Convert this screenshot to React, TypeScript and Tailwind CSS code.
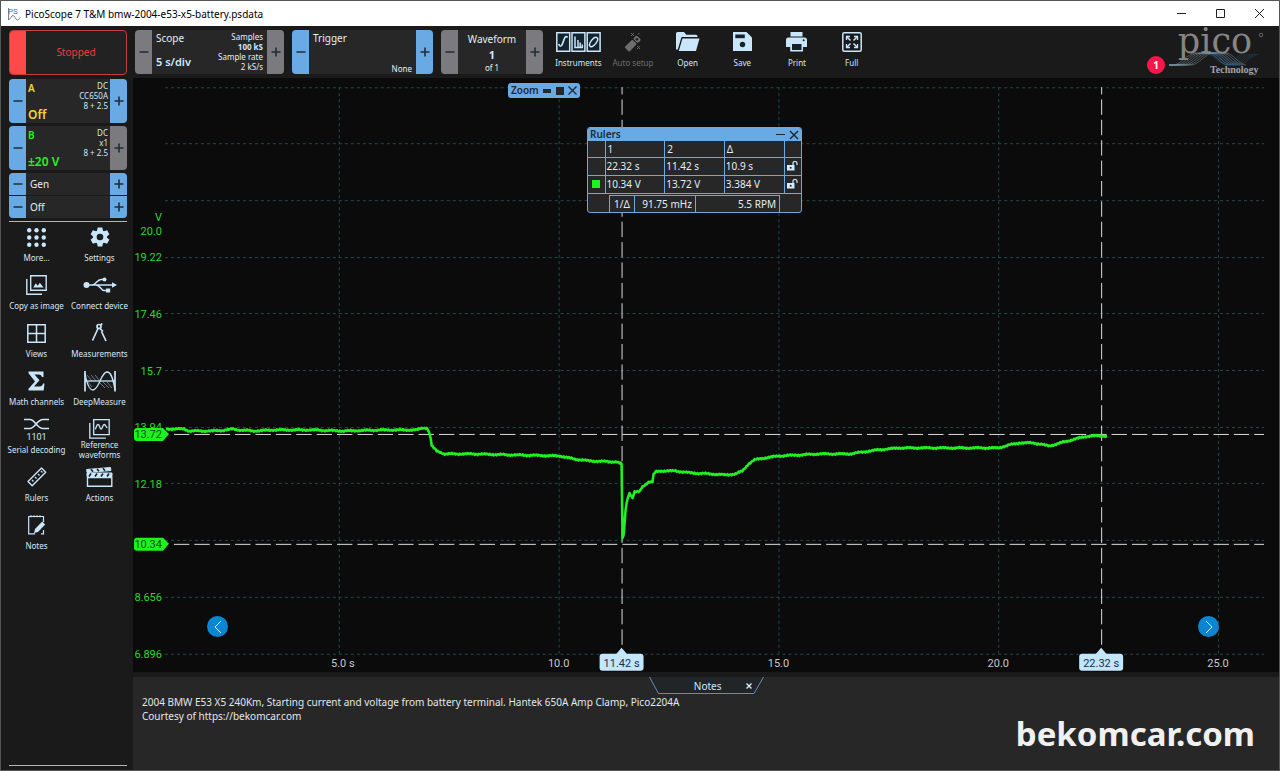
import React from "react";
import { clsx } from "clsx";

type Tone = "blue" | "gray";

interface StepButtonProps {
  sign: "minus" | "plus";
  tone: Tone;
  label: string;
}

const StepButton: React.FC<StepButtonProps> = ({ sign, tone, label }) => (
  <button
    aria-label={label}
    className={clsx(
      "flex w-[17px] shrink-0 items-center justify-center",
      tone === "blue" ? "bg-[#6aaae4]" : "bg-[#7b7b7f]"
    )}
  >
    <svg width="10" height="10" viewBox="0 0 10 10" stroke="#222c36" strokeWidth="1.6">
      <path d={sign === "plus" ? "M.5 5h9M5 .5v9" : "M.5 5h9"} />
    </svg>
  </button>
);

interface StepperProps {
  name: string;
  minus: Tone;
  plus: Tone;
  className?: string;
  children: React.ReactNode;
}

const Stepper: React.FC<StepperProps> = ({ name, minus, plus, className, children }) => (
  <div className={clsx("flex h-11 shrink-0 overflow-hidden rounded-[4px] bg-[#272727]", className)}>
    <StepButton sign="minus" tone={minus} label={`${name} previous`} />
    <div className="min-w-0 flex-1">{children}</div>
    <StepButton sign="plus" tone={plus} label={`${name} next`} />
  </div>
);

interface ChannelProps {
  name: string;
  range: string;
  probe: string;
  color: string;
  plus: Tone;
}

const Channel: React.FC<ChannelProps> = ({ name, range, probe, color, plus }) => (
  <Stepper name={`Channel ${name}`} minus="blue" plus={plus}>
    <div className="flex h-full justify-between px-[2px]">
      <div className={clsx("flex flex-col justify-between font-semibold", color)}>
        <span className="pt-[2px] text-[10px] leading-[14px]">{name}</span>
        <span className="text-[12px] leading-4 whitespace-nowrap">{range}</span>
      </div>
      <div className="pt-[2px] text-right text-[8px] leading-[10px] whitespace-nowrap text-[#d6e6f2]">
        <div>DC</div>
        <div>{probe}</div>
        <div>8 + 2.5</div>
      </div>
    </div>
  </Stepper>
);

const line = {
  fill: "none",
  stroke: "#c9e6fb",
  strokeWidth: 1.5,
};

const icons = {
  instruments: (
    <svg width="45" height="20" viewBox="0 0 45 20" {...line}>
      <path d="M.8.8h12.900v18.400H.8zM16 .8h12.900v18.400H16zM31.200.8h12.900v18.400H31.200z" fill="#15232d" />
      <path d="M2.800 12c.8 3 2.600 3 3.600 0l1.800-5c.8-2.500 2.300-3 3.300-1.500" strokeWidth="1.700" />
      <path d="M19 4.500v11h8M22 15.500V8M24.200 15.500v-5M26.300 15.500v-3" strokeWidth="1.500" />
      <ellipse cx="37.600" cy="10" rx="2.600" ry="5.500" transform="rotate(38 37.600 10)" />
    </svg>
  ),
  auto: (
    <svg width="18" height="20" viewBox="0 0 18 20">
      <g transform="rotate(45 9 11)" fill="#6d6d6d">
        <rect x="6" y="3" width="6.500" height="5" rx="1.500" />
        <rect x="6" y="9" width="6.500" height="11" rx="1" />
        <circle cx="9.200" cy="5.600" r="1.300" fill="#1a1a1a" />
      </g>
      <path d="M7 1l3 3M10 1L7 4M13.500 3l2-2M13 14l3 3M16 14l-3 3" stroke="#6d6d6d" strokeWidth=".9" />
    </svg>
  ),
  open: (
    <svg width="24" height="20" viewBox="0 0 24 20" fill="#c9e6fb">
      <path d="M0 1.500Q0 0 1.500 0H8l2.300 2.800H20q1.500 0 1.500 1.500V5H5.500L1.800 17.500H0z" />
      <path d="M6.500 6.500h17L20 19H2.800z" />
    </svg>
  ),
  save: (
    <svg width="20" height="20" viewBox="0 0 20 20">
      <path d="M1 0h13.500L20 5.500V19H1z" fill="#c9e6fb" />
      <path d="M3.300 2.500h9.500v3.700H3.300z" fill="#14222c" />
      <circle cx="10.500" cy="12.500" r="2.700" fill="#14222c" />
    </svg>
  ),
  print: (
    <svg width="21" height="20" viewBox="0 0 21 20">
      <path d="M4.500 0h12v4.500h-12z" fill="#c9e6fb" />
      <path d="M2.500 5.500h16Q21 5.500 21 8v7h-4v4.500H4.200V15H0V8q0-2.500 2.500-2.500z" fill="#c9e6fb" />
      <path d="M6 12h9.500v6H6z" fill="#14222c" />
      <circle cx="17.700" cy="8.300" r="1" fill="#14222c" />
    </svg>
  ),
  full: (
    <svg width="20" height="20" viewBox="0 0 20 20" {...line}>
      <rect x=".8" y=".8" width="18.400" height="18.400" rx="1.500" />
      <path d="M8.500 8.500L5 5M11.500 8.500L15 5M8.500 11.500L5 15M11.500 11.500L15 15" />
      <path d="M4.500 8V4.500H8M12 4.500h3.500V8M4.500 12v3.500H8M12 15.500h3.500V12" strokeWidth="1.300" />
    </svg>
  ),
  more: (
    <svg width="19" height="19" viewBox="0 0 19 19" fill="#c9e6fb">
      {[2.2, 9.5, 16.8].map((y) =>
        [2.2, 9.5, 16.8].map((x) => <circle key={`${x}-${y}`} cx={x} cy={y} r="2.200" />)
      )}
    </svg>
  ),
  settings: (
    <svg width="20" height="20" viewBox="0 0 20 20">
      <g fill="#c9e6fb">
        <circle cx="10" cy="10" r="7" />
        {[0, 60, 120].map((a) => (
          <path key={a} d="M7.700.5h4.600l.8 4v11l-.8 4H7.700l-.8-4v-11z" transform={`rotate(${a} 10 10)`} />
        ))}
      </g>
      <circle cx="10" cy="10" r="3.300" fill="#1a1a1a" />
    </svg>
  ),
  copy: (
    <svg width="21" height="20" viewBox="0 0 21 20" {...line} strokeWidth="1.400">
      <path d="M4.700.7h15.500v14.500H4.700z" />
      <path d="M.8 4v15.200H16" />
      <path d="M7.200 12.500l2.600-4.200 2 2.500 2-3 3.800 4.700z" fill="#c9e6fb" stroke="none" />
    </svg>
  ),
  usb: (
    <svg width="34" height="16" viewBox="0 0 34 16" {...line} strokeWidth="1.500">
      <circle cx="3.500" cy="8" r="3" fill="#c9e6fb" stroke="none" />
      <path d="M3 8h27M9 8c4 0 5-5.500 9-5.500h3M13 8c4 0 5 5.500 8 5.500h3" />
      <circle cx="21.500" cy="2.500" r="2" fill="#c9e6fb" stroke="none" />
      <path d="M23 11.500h4.200v4H23z" fill="#c9e6fb" stroke="none" />
      <path d="M29 5.300L34 8l-5 2.700z" fill="#c9e6fb" stroke="none" />
    </svg>
  ),
  views: (
    <svg width="19" height="19" viewBox="0 0 19 19" {...line}>
      <path d="M.8.8h17.400v17.400H.8zM9.500.8v17.400M.8 9.500h17.400" />
    </svg>
  ),
  measure: (
    <svg width="17" height="20" viewBox="0 0 17 20" {...line} strokeWidth="1.700">
      <circle cx="8" cy="3.500" r="2" />
      <path d="M7 5.500L1.500 17.500M9 5.500l3 3M10.500 8.500l4.500 9.500" />
      <path d="M10 1.800l1.300-1.300" />
    </svg>
  ),
  math: (
    <svg width="17" height="20" viewBox="0 0 17 20" fill="#c9e6fb">
      <path d="M.5.500h15v5.500h-1.500q-.5-2.500-3-2.500H6.500l5 5.700-5.500 6.300h5.500q3 0 3.500-3H16.500l-.8 7H.5v-1.700L7 10.500.5 2.200z" />
    </svg>
  ),
  deep: (
    <svg width="32" height="21" viewBox="0 0 32 21" {...line} strokeWidth="1.300">
      <path d="M1 0v20.500M31 0v20.500" strokeWidth="1.700" />
      <path d="M1 10h30" />
      <path d="M1 2C3 14 6 19 9 19c6 0 8-18 14-18 4 0 6 6 8 18" />
      <path d="M3 4l5 6M7 4l5 6M11 4l4 5M15 11l6 6M19 11l6 6M23 11l5 6M4 11l4 5" strokeWidth=".6" opacity=".8" />
    </svg>
  ),
  serial: (
    <svg width="25" height="22" viewBox="0 0 25 22" {...line} strokeWidth="1.600">
      <path d="M0 1.500h6c5 0 7 9 13 9h6M0 10.500h6c5 0 7-9 13-9h6" />
      <text x="12.500" y="21.500" textAnchor="middle" fontSize="9" fontFamily="Roboto, sans-serif" fill="#c9e6fb" stroke="none">1101</text>
    </svg>
  ),
  reference: (
    <svg width="21" height="20" viewBox="0 0 21 20" {...line} strokeWidth="1.300">
      <path d="M4.700.7h15.500v15H4.700z" />
      <path d="M.8 4v15.200h16" />
      <path d="M6 10c1.500 0 1-4.500 3-4.500s1.500 4.500 3 4.500 1.500-4.500 3.300-4.500S16.500 8.500 18.500 8.500" />
    </svg>
  ),
  ruler: (
    <svg width="20" height="20" viewBox="0 0 20 20" {...line} strokeWidth="1.400">
      <path d="M1 14.500L14.500 1l4.200 4.200L5.200 18.700z" strokeLinejoin="round" />
      <path d="M5 13l1.500 1.500M8 10l1.500 1.500M11 7l1.500 1.500M14 4l1.500 1.500" strokeWidth="1.200" />
    </svg>
  ),
  actions: (
    <svg width="27" height="20" viewBox="0 0 27 20" {...line} strokeWidth="1.400">
      <path d="M1.500 10.500h24.300v8.700H1.500z" />
      <path d="M1 6h25v3.500H1zM.7 2.500L24.500.5l.4 3L1 5.500z" fill="#c9e6fb" strokeWidth="1" />
      <path d="M5 6.500l-2 3M11 6.500l-2 3M17 6.500l-2 3M23 6.500l-2 3M5 2.300l2 2.500M11 1.800l2 2.500M17 1.300l2 2.500" stroke="#1a1a1a" strokeWidth="1.500" />
    </svg>
  ),
  notes: (
    <svg width="18" height="20" viewBox="0 0 18 20" {...line} strokeWidth="1.200">
      <path d="M15.500 7V1.500H.7v17.300h6.500M13 18.800h2.500V15" />
      <path d="M3 .3v2M6 .3v2M9 .3v2M12 .3v2" />
      <path d="M6 18l1-4 7.200-7.500 3 3L10 17z" fill="#c9e6fb" stroke="none" />
    </svg>
  ),
};

const toolbar = [
  { label: "Instruments", icon: icons.instruments },
  { label: "Auto setup", icon: icons.auto, disabled: true },
  { label: "Open", icon: icons.open },
  { label: "Save", icon: icons.save },
  { label: "Print", icon: icons.print },
  { label: "Full", icon: icons.full },
];

const sideTools = [
  { label: "More...", icon: icons.more },
  { label: "Settings", icon: icons.settings },
  { label: "Copy as image", icon: icons.copy },
  { label: "Connect device", icon: icons.usb },
  { label: "Views", icon: icons.views },
  { label: "Measurements", icon: icons.measure },
  { label: "Math channels", icon: icons.math },
  { label: "DeepMeasure", icon: icons.deep },
  { label: "Serial decoding", icon: icons.serial },
  { label: "Reference waveforms", icon: icons.reference },
  { label: "Rulers", icon: icons.ruler },
  { label: "Actions", icon: icons.actions },
  { label: "Notes", icon: icons.notes },
];

const TitleBar = () => (
  <div className="flex h-[25px] shrink-0 items-center bg-white pl-[7px] text-black">
    <svg width="13" height="14" viewBox="0 0 13 14">
      <text x="0" y="7" fontSize="8" fontFamily="Roboto, sans-serif" fill="#2f7fc0">PS</text>
      <path d="M.5 12.500C3 12.500 3 8.500 5 8.500s2.500 4.500 4.500 4.500 1.500-2.500 3-2.500M.5 1v12" fill="none" stroke="#55646f" strokeWidth=".8" />
    </svg>
    <span className="ml-1 text-[10px] leading-4">PicoScope 7 T&amp;M bmw-2004-e53-x5-battery.psdata</span>
    <div className="ml-auto flex">
      <button aria-label="Minimize" className="flex h-[25px] w-[39px] items-center justify-center">
        <svg width="9" height="9" viewBox="0 0 9 9"><path d="M0 4.500h9" stroke="#222" /></svg>
      </button>
      <button aria-label="Maximize" className="flex h-[25px] w-[39px] items-center justify-center">
        <svg width="9" height="9" viewBox="0 0 9 9"><path d="M.5.5h8v8h-8z" fill="none" stroke="#222" /></svg>
      </button>
      <button aria-label="Close" className="flex h-[25px] w-[39px] items-center justify-center">
        <svg width="9" height="9" viewBox="0 0 9 9"><path d="M0 0l9 9M9 0L0 9" stroke="#222" /></svg>
      </button>
    </div>
  </div>
);

const Logo = () => (
  <svg width="98" height="58" viewBox="0 -8 98 58" role="img" aria-label="pico Technology">
    {[0, 1, 2, 3, 4, 5, 6].map((i) => (
      <g key={i} fill="none" strokeWidth=".7">
        <path d={`M0 39h${4 + i * 3}c8 0 14-12 23-12h12c7 0 13 12 20 12`} stroke="#7e98a8" opacity=".7" />
        <path d={`M${36 + i * 2} 27c8 0 14 12 22 12s10-9 ${14 + i}-11`} stroke="#23587c" opacity=".6" />
      </g>
    ))}
    <text x="46" y="27" textAnchor="middle" fontSize="35" fontFamily="'DejaVu Serif', serif" fill="#858585">pico</text>
    <circle cx="92" cy="9" r="1.800" fill="none" stroke="#777" strokeWidth=".8" />
    <text x="41" y="47" fontSize="10" fontWeight="bold" fontFamily="'Liberation Serif', serif" fill="#a3a3a3">Technology</text>
  </svg>
);

const Header = () => (
  <header className="flex h-[52px] shrink-0 items-start gap-2 pt-1 pl-2">
    <button className="flex h-[45px] w-[118px] shrink-0 overflow-hidden rounded-[4px] border border-[#c93c3c] bg-[#222] text-[10px] text-[#e8413f]">
      <span className="h-full w-4 bg-[#fb4a48]" />
      <span className="flex h-full flex-1 items-center justify-center">Stopped</span>
    </button>

    <Stepper name="Scope" minus="gray" plus="gray" className="w-[149px]">
      <div className="flex h-full justify-between px-1">
        <div className="flex flex-col justify-between">
          <span className="text-[10px] leading-4 text-[#e6eef4]">Scope</span>
          <span className="pb-1 text-[11px] leading-4 font-semibold whitespace-nowrap text-[#cde8fc]">5 s/div</span>
        </div>
        <div className="pt-[2px] text-right text-[8px] leading-[10px] whitespace-nowrap text-[#e6eef4]">
          <div>Samples</div>
          <div className="font-bold text-[#cde8fc]">100 kS</div>
          <div>Sample rate</div>
          <div>2 kS/s</div>
        </div>
      </div>
    </Stepper>

    <Stepper name="Trigger" minus="blue" plus="blue" className="w-[141px]">
      <div className="flex h-full flex-col justify-between px-1">
        <span className="text-[10px] leading-4 text-[#e6eef4]">Trigger</span>
        <span className="text-right text-[8px] leading-[10px] text-[#e6eef4]">None</span>
      </div>
    </Stepper>

    <Stepper name="Waveform" minus="gray" plus="gray" className="w-[102px]">
      <div className="flex h-full flex-col items-center justify-between pt-[1px]">
        <span className="text-[10px] leading-4 text-[#e6eef4]">Waveform</span>
        <span className="text-[11px] leading-[14px] font-bold text-[#cde8fc]">1</span>
        <span className="text-[8px] leading-3 text-[#e6eef4]">of 1</span>
      </div>
    </Stepper>

    <div className="grid w-[328px] shrink-0 grid-cols-6">
      {toolbar.map((t) => (
        <button
          key={t.label}
          disabled={t.disabled}
          className={clsx(
            "flex flex-col items-center text-[8px] leading-[10px] whitespace-nowrap",
            t.disabled ? "text-[#6d6d6d]" : "text-[#cde8fc]"
          )}
        >
          <span className="flex h-6 items-center">{t.icon}</span>
          <span className="mt-1">{t.label}</span>
        </button>
      ))}
    </div>

    <div className="relative mr-3 ml-auto -mt-3">
      <Logo />
      <span className="absolute top-[38px] -left-[22px] flex h-[18px] w-[18px] items-center justify-center rounded-full bg-[#f8164a] text-[10px] font-bold text-white">
        1
      </span>
    </div>
  </header>
);

const Sidebar = () => (
  <aside className="flex w-[132px] shrink-0 flex-col pt-[1px] pr-[6px] pl-2">
    <div className="flex flex-col gap-[3px]">
      <Channel name="A" range="Off" probe="CC650A" color="text-[#f2d43c]" plus="blue" />
      <Channel name="B" range="±20 V" probe="x1" color="text-[#2bf02b]" plus="gray" />
      <div className="flex flex-col gap-[1px] overflow-hidden rounded-[4px]">
        {["Gen", "Off"].map((g) => (
          <div key={g} className="flex h-[22px] bg-[#272727]">
            <StepButton sign="minus" tone="blue" label={`${g} previous`} />
            <span className="flex-1 pl-1 text-[10px] leading-[22px] text-[#e6eef4]">{g}</span>
            <StepButton sign="plus" tone="blue" label={`${g} next`} />
          </div>
        ))}
      </div>
    </div>
    <hr className="mt-[3px] border-[#b5b5b5]" />
    <nav className="-mx-1 grid grid-cols-2">
      {sideTools.map((t) => (
        <button
          key={t.label}
          className="flex h-12 flex-col items-center text-[8px] leading-[10px] text-[#d6e9f7]"
        >
          <span className="flex h-[26px] shrink-0 items-center pt-1">{t.icon}</span>
          <span className={clsx("flex h-5 items-center", t.label.length < 16 && "whitespace-nowrap")}>{t.label}</span>
        </button>
      ))}
    </nav>
    <hr className="mt-auto mb-1 border-[#b5b5b5]" />
  </aside>
);

// plot area, one volt is 32.2 units and one second is 44 units
const LEFT = 32;
const RIGHT = 1132;
const TOP = 9;
const BOTTOM = 576;
const timeX = (t: number) => 44 * t - 14;
const rows = ["", "", "", "19.22", "17.46", "15.7", "13.94", "12.18", "", "8.656", "6.896"];
const times = [
  { t: 5, label: "5.0 s" },
  { t: 10, label: "10.0" },
  { t: 15, label: "15.0" },
  { t: 20, label: "20.0" },
  { t: 25, label: "25.0" },
];

const samples: [number, number][] = [
  [33, 351], [51, 351], [56, 353], [80, 353], [94, 352], [100, 351], [106, 352], [122, 353], [140, 352],
  [180, 352], [210, 353], [250, 352], [284, 352], [290, 350], [294, 350], [296, 353], [298, 361], [299, 368],
  [304, 373], [312, 376], [340, 376], [380, 377], [427, 378], [441, 381], [457, 383], [484, 384], [489, 386],
  [490, 460], [491, 458], [493, 432], [495, 420], [497, 415], [500, 420], [502, 414], [507, 414], [509, 410],
  [511, 408], [516, 404], [520, 404], [521, 397], [523, 394], [528, 393], [543, 393], [558, 395], [578, 396],
  [593, 397], [603, 396], [610, 393], [616, 386], [622, 382], [632, 380], [647, 378], [687, 376], [717, 376],
  [745, 372], [767, 370], [866, 370], [877, 367], [887, 365], [902, 365], [917, 368], [932, 364], [947, 360],
  [957, 358], [975, 358],
];

// fills the gaps between samples with a small repeatable ripple
const trace = () => {
  const pts: string[] = [];
  for (let i = 0; i < samples.length - 1; i++) {
    const [x0, y0] = samples[i];
    const [x1, y1] = samples[i + 1];
    const n = Math.max(1, Math.floor(x1 - x0));
    for (let k = 0; k < n; k++) {
      const x = x0 + ((x1 - x0) * k) / n;
      const noise = n > 1 ? Math.sin(x * 2.3) * 0.6 + Math.sin(x * 0.37) * 0.4 : 0;
      pts.push(`${x.toFixed(1)},${(y0 + ((y1 - y0) * k) / n + noise).toFixed(1)}`);
    }
  }
  pts.push("975,358");
  return pts.join(" ");
};

const Chart = () => (
  <svg className="block h-full w-full" viewBox="0 0 1147 594" fontFamily="Roboto, sans-serif" fontSize="11">
    <g stroke="#204a4c" strokeDasharray="3 3" fill="none">
      {rows.map((_, i) => {
        const y = Math.floor(TOP + i * 56.7) + 0.5;
        return <path key={i} d={`M${LEFT} ${y}H${RIGHT}`} />;
      })}
      {times.map(({ t }) => (
        <path key={t} d={`M${timeX(t) + 0.5} ${TOP}V${BOTTOM}`} />
      ))}
    </g>

    <g fill="#2bd92b" textAnchor="end">
      <text x="29" y="143">V</text>
      <text x="29" y="157">20.0</text>
      {rows.map((r, i) => r && (
        <text key={r} x="29" y={Math.round(TOP + i * 56.7) + 4}>{r}</text>
      ))}
    </g>
    <g fill="#c8c8c8" textAnchor="middle">
      {times.map(({ t, label }) => (
        <text key={t} x={t === 5 ? timeX(t) + 4 : timeX(t)} y="589">{label}</text>
      ))}
    </g>

    <g stroke="#dcdcdc" strokeDasharray="15.4 5">
      <path d={`M41 356.500H${RIGHT}M41 466.500H${RIGHT}`} />
      <path d="M489.500 567V9M969.500 567V9" />
    </g>

    <polyline points={trace()} fill="none" stroke="#22ee22" strokeWidth="2.600" strokeLinejoin="round" />

    {[
      { y: 356, label: "13.72" },
      { y: 466, label: "10.34" },
    ].map(({ y, label }) => (
      <g key={label}>
        <path d={`M4 ${y - 6}h26l6 6-6 7H4q-3 0-3-3v-7q0-3 3-3z`} fill="#1cf51c" />
        <text x="29" y={y + 4} textAnchor="end" fill="#0b4d12">{label}</text>
      </g>
    ))}
    {[
      { x: 489, label: "11.42 s" },
      { x: 969, label: "22.32 s" },
    ].map(({ x, label }) => (
      <g key={label}>
        <path d={`M${x - 6} 577l6-7 6 7z`} fill="#c3e5fd" />
        <rect x={x - 22} y="576" width="44" height="17" rx="3" fill="#c3e5fd" />
        <text x={x} y="589" textAnchor="middle" fill="#15304a">{label}</text>
      </g>
    ))}
  </svg>
);

const Unlock = () => (
  <svg className="mx-auto" width="11" height="10" viewBox="0 0 11 10">
    <path d="M0 4h7.500v5.500H0z" fill="#d4ebfb" />
    <path d="M6 4V2.500q0-2 2-2t2 2V4" fill="none" stroke="#d4ebfb" strokeWidth="1.200" />
    <circle cx="3.700" cy="6.700" r="1" fill="#272727" />
  </svg>
);

const RulersPanel = () => (
  <section className="absolute top-[49px] left-[454px] w-[215px] overflow-hidden rounded-[3px] border border-[#6aaae4] bg-[#272727] text-[10px] text-[#e6eef4]">
    <div className="flex h-[13px] items-center bg-[#6aaae4] px-[2px] text-[#1a2b3a]">
      <h2 className="text-[10px] leading-[13px] font-semibold">Rulers</h2>
      <button aria-label="Collapse rulers" className="ml-auto">
        <svg width="9" height="9" viewBox="0 0 9 9"><path d="M0 4.500h9" stroke="#1a2b3a" /></svg>
      </button>
      <button aria-label="Close rulers" className="ml-1">
        <svg width="10" height="10" viewBox="0 0 10 10"><path d="M1 1l8 8M9 1L1 9" stroke="#1a2b3a" strokeWidth="1.500" /></svg>
      </button>
    </div>
    <table className="w-full table-fixed border-collapse border-b border-[#6aaae4] text-left leading-[14px]">
      <colgroup>
        <col className="w-[17px]" />
        <col />
        <col />
        <col />
        <col className="w-[17px]" />
      </colgroup>
      <thead>
        <tr className="h-4 border-b border-[#6aaae4]">
          <td className="border-r border-[#6aaae4]" />
          {["1", "2", "Δ"].map((h) => (
            <th key={h} className="border-r border-[#6aaae4] pl-[2px] font-normal">{h}</th>
          ))}
          <td />
        </tr>
      </thead>
      <tbody>
        {[
          ["22.32 s", "11.42 s", "10.9 s"],
          ["10.34 V", "13.72 V", "3.384 V"],
        ].map((r, i) => (
          <tr key={i} className="h-[18px] border-b border-[#6aaae4]">
            <td className="border-r border-[#6aaae4]">
              {i === 1 && <div className="mx-auto h-2 w-2 bg-[#1cf51c]" />}
            </td>
            {r.map((v) => (
              <td key={v} className="border-r border-[#6aaae4] pl-[1px]">{v}</td>
            ))}
            <td>
              <button aria-label="Lock rulers" className="block w-full"><Unlock /></button>
            </td>
          </tr>
        ))}
      </tbody>
    </table>
    <dl className="mx-[21px] mt-[1px] flex border-x border-t border-[#6aaae4] leading-4">
      <dt className="border-r border-[#6aaae4] px-1">1/Δ</dt>
      <dd className="w-[61px] border-r border-[#6aaae4] pr-[3px] text-right">91.75 mHz</dd>
      <dd className="flex-1 pr-[3px] text-right">5.5 RPM</dd>
    </dl>
  </section>
);

const ZoomBox = () => (
  <div className="absolute top-[5px] left-[375px] flex h-[15px] w-[72px] items-center justify-between rounded-[3px] bg-[#6aaae4] px-[3px] text-[10px] font-semibold text-[#1a2b3a]">
    <span>Zoom</span>
    <button aria-label="Shrink zoom" className="h-1 w-2 bg-[#272727]" />
    <button aria-label="Restore zoom" className="h-2 w-2 bg-[#272727]" />
    <button aria-label="Close zoom">
      <svg width="9" height="9" viewBox="0 0 9 9"><path d="M.5.5l8 8M8.500.5l-8 8" stroke="#1a2b3a" strokeWidth="1.400" /></svg>
    </button>
  </div>
);

const NotesPanel = () => (
  <section className="relative flex h-[93px] shrink-0 flex-col bg-[#272727]">
    <div className="relative mx-auto h-[18px] w-[115px]">
      <svg className="absolute inset-0" width="115" height="18" viewBox="0 0 115 18">
        <path d="M.5 0l9 16.500h95.500L114.500 0" fill="#222528" stroke="#5b8fbf" />
      </svg>
      <div className="relative flex h-full items-center justify-end pr-3 text-[#cde8fc]">
        <h2 className="mr-6 text-[10px] leading-[18px]">Notes</h2>
        <button aria-label="Close notes">
          <svg width="6" height="6" viewBox="0 0 6 6"><path d="M.5.5l5 5M5.500.5l-5 5" stroke="#e0eefa" strokeWidth="1.300" /></svg>
        </button>
      </div>
    </div>
    <textarea
      aria-label="Notes"
      className="w-full flex-1 resize-none bg-transparent px-[9px] text-[10px] leading-[14px] text-[#e2e8ec] outline-none"
      defaultValue={
        "2004 BMW E53 X5 240Km, Starting current and voltage from battery terminal. Hantek 650A Amp Clamp, Pico2204A\nCourtesy of https://bekomcar.com"
      }
    />
    <span className="pointer-events-none absolute right-6 bottom-[14px] text-[33px] leading-[44px] font-bold text-[#f0f0f0]">
      bekomcar.com
    </span>
  </section>
);

const roundButton =
  "absolute bottom-[35px] flex h-[21px] w-[21px] items-center justify-center rounded-full bg-[#0c86d2]";

const App: React.FC = () => {
  return (
    <div className="flex h-screen min-h-[680px] flex-col border border-[#555] bg-[#1a1a1a] font-['Noto_Sans',sans-serif]">
      <TitleBar />
      <Header />
      <div className="flex min-h-0 flex-1">
        <Sidebar />
        <main className="flex min-w-0 flex-1 flex-col">
          <div className="relative min-h-0 flex-1 bg-[#0b0b0b]">
            <Chart />
            <ZoomBox />
            <RulersPanel />
            <button aria-label="Previous waveform" className={clsx(roundButton, "left-[74px]")}>
              <svg width="8" height="14" viewBox="0 0 8 14"><path d="M7 1L1 7l6 6" fill="none" stroke="#d8efff" /></svg>
            </button>
            <button aria-label="Next waveform" className={clsx(roundButton, "right-[60px]")}>
              <svg width="8" height="14" viewBox="0 0 8 14"><path d="M1 1l6 6-6 6" fill="none" stroke="#d8efff" /></svg>
            </button>
          </div>
          <div className="h-[5px] shrink-0" />
          <NotesPanel />
        </main>
      </div>
    </div>
  );
};

export default App;
